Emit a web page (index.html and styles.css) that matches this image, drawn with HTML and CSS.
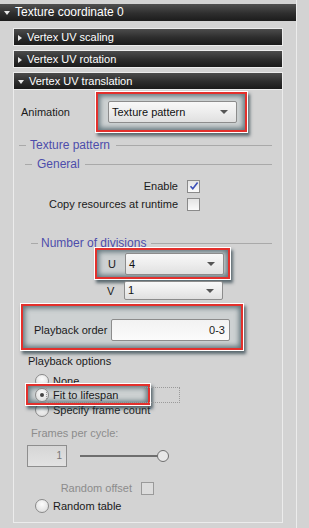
FILE: index.html
```html
<!DOCTYPE html>
<html lang="en">
<head>
    <meta charset="UTF-8">
    <title>Texture coordinate</title>
    <link rel="stylesheet" href="styles.css">
</head>
<body>
    <div class="panel">
        <div class="main-head"><span class="arrow-down"></span>Texture coordinate 0</div>

        <div class="group">
            <div class="sub-head"><span class="arrow-right"></span>Vertex UV scaling</div>
            <div class="sub-head"><span class="arrow-right"></span>Vertex UV rotation</div>
            <div class="sub-head open"><span class="arrow-down"></span>Vertex UV translation</div>

            <div class="sub-body">
                <div class="row anim-row">
                    <span class="anim-label">Animation</span>
                    <div class="hl hl-anim">
                        <div class="select wide">Texture pattern<span class="caret"></span></div>
                    </div>
                </div>

                <div class="legend lv1"><span class="dash"></span><span class="legend-text">Texture pattern</span><span class="rule"></span></div>
                <div class="legend lv2"><span class="dash"></span><span class="legend-text">General</span><span class="rule"></span></div>

                <div class="check-row first">
                    <span class="check-label">Enable</span>
                    <span class="checkbox checked">
                        <svg width="10" height="10" viewBox="0 0 10 10"><path d="M1.5 5.2 L3.8 7.8 L8.6 1.6" fill="none" stroke="#3b4fb8" stroke-width="1.6"/></svg>
                    </span>
                </div>
                <div class="check-row">
                    <span class="check-label">Copy resources at runtime</span>
                    <span class="checkbox"></span>
                </div>

                <div class="legend lv3"><span class="dash"></span><span class="legend-text">Number of divisions</span><span class="rule"></span></div>

                <div class="hl hl-u">
                    <span class="axis">U</span>
                    <div class="select narrow">4<span class="caret"></span></div>
                </div>
                <div class="v-row">
                    <span class="axis">V</span>
                    <div class="select narrow short">1<span class="caret"></span></div>
                </div>

                <div class="hl hl-order">
                    <span class="order-label">Playback order</span>
                    <div class="textbox">0-3</div>
                </div>

                <div class="opt-title">Playback options</div>
                <div class="radio-row none-row"><span class="radio"></span>None</div>
                <div class="hl hl-fit">
                    <span class="radio on"></span>Fit to lifespan
                    <span class="focus-dots"></span>
                </div>
                <div class="radio-row tight"><span class="radio"></span>Specify frame count</div>

                <div class="muted frames-title">Frames per cycle:</div>
                <div class="frames-row">
                    <div class="num-box">1</div>
                    <div class="slider"><span class="track"></span><span class="knob"></span></div>
                </div>

                <div class="check-row offset-row">
                    <span class="check-label muted">Random offset</span>
                    <span class="checkbox dim"></span>
                </div>
                <div class="radio-row last"><span class="radio"></span>Random table</div>
            </div>
        </div>
    </div>
</body>
</html>
```

FILE: styles.css
```css
body {
    margin: 0;
    background: #d3d3d3;
    font-family: 'Liberation Sans', Arial, sans-serif;
    font-size: 11px;
    color: #1a1a1a;
}

.panel {
    width: 297px;
    height: 528px;
    border-right: 1px solid #ececec;
    padding-top: 4px;
    box-sizing: border-box;
}

.main-head {
    height: 17px;
    background: linear-gradient(#505050, #2e2e2e 55%, #1c1c1c);
    color: #fff;
    font-size: 12px;
    line-height: 17px;
    padding-left: 3px;
    display: flex;
    align-items: center;
}

.arrow-down {
    width: 0;
    height: 0;
    border-left: 3px solid transparent;
    border-right: 3px solid transparent;
    border-top: 4px solid #e8e8e8;
    margin: 1px 5px 0 1px;
}

.arrow-right {
    width: 0;
    height: 0;
    border-top: 3px solid transparent;
    border-bottom: 3px solid transparent;
    border-left: 4px solid #e8e8e8;
    margin: 1px 5px 0 3px;
}

.group {
    padding: 7px 0 0 13px;
    width: 270px;
}

.sub-head {
    height: 16px;
    border: 1px solid #ececec;
    background: linear-gradient(#4c4c4c, #2c2c2c 55%, #1a1a1a);
    color: #fff;
    line-height: 16px;
    display: flex;
    align-items: center;
    padding-left: 1px;
    margin-bottom: 4px;
}

.sub-head.open {
    margin-bottom: 0;
}

.sub-head.open .arrow-down {
    margin-left: 3px;
}

.sub-body {
    border: 1px solid #ececec;
    border-top: none;
    height: 432px;
}

.row {
    display: flex;
    align-items: center;
}

.anim-row {
    padding-top: 2px;
}

.anim-label {
    width: 75px;
    padding-left: 7px;
}

.hl {
    border: 2px solid #e3302c;
    box-shadow: 0 0 0 1px #fff, 2px 3px 3px 1px rgba(40, 60, 70, 0.7), inset 0 0 5px 2px rgba(60, 85, 95, 0.75);
    background: #cdd1d2;
    box-sizing: border-box;
}

.hl-anim {
    width: 151px;
    height: 40px;
    padding: 7px 0 0 10px;
}

.select {
    position: relative;
    height: 22px;
    box-sizing: border-box;
    border: 1px solid #8c8c8c;
    border-radius: 2px;
    background: linear-gradient(#f8f8f8, #ededed 50%, #e0e0e0);
    padding-left: 3px;
    line-height: 20px;
    color: #111;
}

.select.wide {
    width: 129px;
}

.select.narrow {
    width: 99px;
}

.select.short {
    height: 19px;
    line-height: 17px;
}

.caret {
    position: absolute;
    right: 8px;
    top: 8px;
    border-left: 4px solid transparent;
    border-right: 4px solid transparent;
    border-top: 4px solid #555;
}

.select.short .caret {
    top: 7px;
}

.legend {
    display: flex;
    align-items: center;
    color: #4d4dab;
    font-size: 12px;
    height: 16px;
}

.legend .dash {
    width: 7px;
    border-top: 1px solid #a9a9a9;
}

.legend .rule {
    flex: 1;
    border-top: 1px solid #a9a9a9;
}

.lv1 {
    margin: 5px 10px 0 5px;
}

.lv1 .legend-text {
    margin: 0 6px 0 4px;
}

.lv2 {
    margin: 3px 10px 0 11px;
}

.lv2 .legend-text {
    margin: 0 5px 0 5px;
}

.lv3 {
    margin: 22px 10px 0 17px;
}

.lv3 .legend-text {
    margin: 0 5px 0 3px;
}

.check-row {
    display: flex;
    align-items: center;
    height: 18px;
}

.check-row.first {
    margin-top: 5px;
}

.check-label {
    width: 164px;
    text-align: right;
    margin-right: 9px;
}

.checkbox {
    width: 13px;
    height: 13px;
    box-sizing: border-box;
    border: 1px solid #8a8a8a;
    background: linear-gradient(#e4e4e4, #fafafa);
    display: flex;
    align-items: center;
    justify-content: center;
}

.checkbox.dim {
    border-color: #9a9a9a;
    background: #dcdcdc;
}

.hl-u {
    margin: -3px 0 0 81px;
    width: 135px;
    height: 31px;
    display: flex;
    align-items: center;
    padding: 1px 0 0 10px;
}

.axis {
    width: 17px;
    padding-left: 1px;
}

.v-row {
    display: flex;
    align-items: center;
    margin: 2px 0 0 93px;
    height: 19px;
}

.v-row .axis {
    padding-left: 0;
}

.hl-order {
    margin: 4px 0 0 7px;
    width: 222px;
    height: 46px;
    display: flex;
    align-items: center;
    padding: 5px 0 0 11px;
}

.order-label {
    width: 77px;
}

.textbox {
    width: 119px;
    height: 22px;
    box-sizing: border-box;
    border: 1px solid #8c8c8c;
    border-radius: 2px;
    background: linear-gradient(#f2f2f2, #fbfbfb);
    text-align: right;
    line-height: 20px;
    padding-right: 4px;
}

.opt-title {
    margin: 4px 0 0 14px;
    height: 14px;
    line-height: 14px;
}

.radio-row {
    display: flex;
    align-items: center;
    height: 15px;
    margin: 0 0 0 21px;
}

.radio-row.none-row {
    margin-top: 5px;
}

.radio-row.tight {
    margin-top: -2px;
    height: 13px;
}

.radio {
    width: 12px;
    height: 12px;
    border: 1px solid #8a8a8a;
    border-radius: 50%;
    background: radial-gradient(circle at 50% 35%, #fcfcfc, #d8d8d8);
    margin-right: 4px;
    display: flex;
    align-items: center;
    justify-content: center;
    flex: none;
}

.radio.on::after {
    content: "";
    width: 4px;
    height: 4px;
    border-radius: 50%;
    background: #444;
}

.hl-fit {
    position: relative;
    margin: -4px 0 0 12px;
    width: 124px;
    height: 21px;
    display: flex;
    align-items: center;
    padding-left: 7px;
}

.focus-dots {
    position: absolute;
    left: 18px;
    top: 1px;
    width: 132px;
    height: 14px;
    border: 1px dotted #9a9a9a;
    pointer-events: none;
}

.muted {
    color: #8c8c8c;
}

.frames-title {
    margin: 10px 0 0 17px;
    height: 14px;
    line-height: 14px;
}

.frames-row {
    display: flex;
    align-items: center;
    margin: 5px 0 0 13px;
}

.num-box {
    width: 40px;
    height: 22px;
    box-sizing: border-box;
    border: 1px solid #8e8e8e;
    background: linear-gradient(#d6d6d6, #e2e2e2);
    color: #777;
    text-align: right;
    line-height: 20px;
    padding-right: 4px;
    font-size: 10px;
}

.slider {
    position: relative;
    width: 89px;
    height: 12px;
    margin-left: 13px;
}

.track {
    position: absolute;
    left: 0;
    right: 10px;
    top: 5px;
    height: 2px;
    background: #6e6e6e;
}

.knob {
    position: absolute;
    right: 0;
    top: 0;
    width: 10px;
    height: 10px;
    border: 1px solid #6e6e6e;
    border-radius: 50%;
    background: #e8e8e8;
}

.offset-row {
    margin-top: 12px;
}

.offset-row .check-label {
    width: 118px;
    margin-right: 9px;
}

.radio-row.last {
    margin-top: 1px;
}
```
